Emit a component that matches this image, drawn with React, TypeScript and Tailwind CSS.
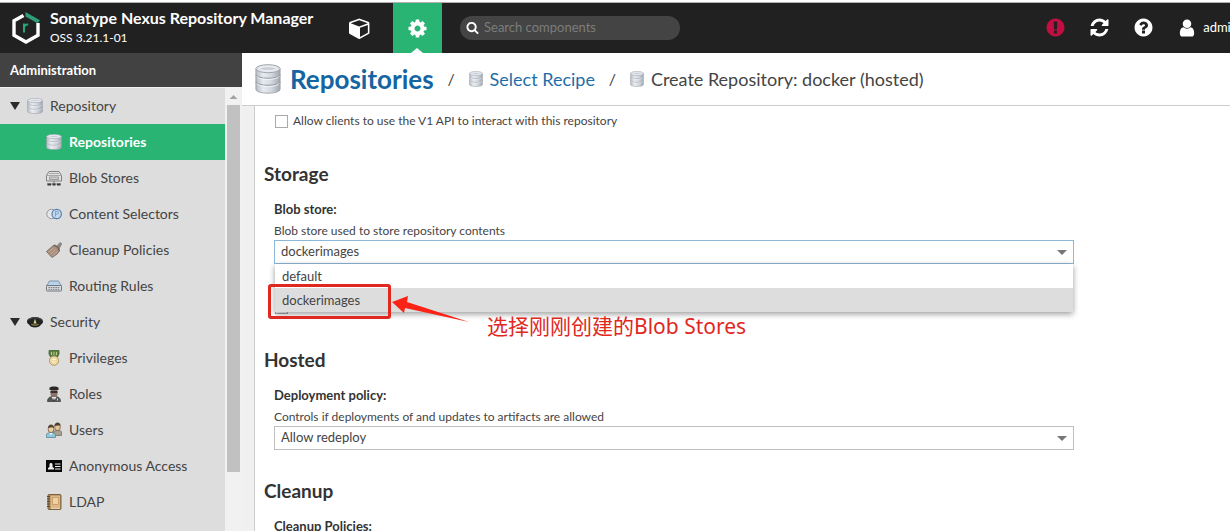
import { useState } from "react";
import type { ReactNode } from "react";
import clsx from "clsx";

const glyphs = {
  cube: "M896 1629l640-349v-636l-640 233v752zm-64-865l698-254-698-254-698 254zm832-252v768q0 35-18 65t-49 47l-704 384q-28 16-61 16t-61-16l-704-384q-31-17-49-47t-18-65v-768q0-40 23-73t61-47l704-256q22-8 44-8t44 8l704 256q38 14 61 47t23 73z",
  cog: "M1152 896q0-106-75-181t-181-75-181 75-75 181 75 181 181 75 181-75 75-181zm512-109v222q0 12-8 23t-20 13l-185 28q-19 54-39 91 35 50 107 138 10 12 10 25t-9 23q-27 37-99 108t-94 71q-12 0-26-9l-138-108q-44 23-91 38-16 136-29 186-7 28-36 28h-222q-14 0-24.5-8.5t-11.5-21.5l-28-184q-49-16-90-37l-141 107q-10 9-25 9-14 0-25-11-126-114-165-168-7-10-7-23 0-12 8-23 15-21 51-66.5t54-70.5q-27-50-41-99l-183-27q-13-2-21-12.5t-8-23.5v-222q0-12 8-23t19-13l186-28q14-46 39-92-40-57-107-138-10-12-10-24 0-10 9-23 26-36 98.5-107.5t94.5-71.5q13 0 26 10l138 107q44-23 91-38 16-136 29-186 7-28 36-28h222q14 0 24.5 8.5t11.5 21.5l28 184q49 16 90 37l142-107q9-9 24-9 13 0 25 10 129 119 165 170 7 8 7 22 0 12-8 23-15 21-51 66.5t-54 70.5q26 50 41 98l183 28q13 2 21 12.5t8 23.5z",
  search: "M1216 832q0-185-131.5-316.5t-316.5-131.5-316.5 131.5-131.5 316.5 131.5 316.5 316.5 131.5 316.5-131.5 131.5-316.5zm512 832q0 52-38 90t-90 38q-54 0-90-38l-343-342q-179 124-399 124-143 0-273.5-55.5t-225-150-150-225-55.5-273.5 55.5-273.5 150-225 225-150 273.5-55.5 273.5 55.5 225 150 150 225 55.5 273.5q0 220-124 399l343 343q37 37 37 90z",
  refresh: "M1639 1056q0 5-1 7-64 268-268 434.5t-478 166.5q-146 0-282.5-55t-243.5-157l-129 129q-19 19-45 19t-45-19-19-45v-448q0-26 19-45t45-19h448q26 0 45 19t19 45-19 45l-137 137q71 66 161 102t187 36q134 0 250-65t186-179q11-17 53-117 8-23 30-23h192q13 0 22.5 9.5t9.5 22.5zm25-800v448q0 26-19 45t-45 19h-448q-26 0-45-19t-19-45 19-45l138-138q-148-137-349-137-134 0-250 65t-186 179q-11 17-53 117-8 23-30 23h-199q-13 0-22.5-9.5t-9.5-22.5v-7q65-268 270-434.5t480-166.5q146 0 284 55.5t245 156.5l130-129q19-19 45-19t45 19 19 45z",
  warning: "M896 128q209 0 385.5 103t279.5 279.5 103 385.5-103 385.5-279.5 279.5-385.5 103-385.5-103-279.5-279.5-103-385.5 103-385.5 279.5-279.5 385.5-103zm128 1247v-190q0-14-9-23.5t-22-9.5h-192q-13 0-23 10t-10 23v190q0 13 10 23t23 10h192q13 0 22-9.5t9-23.5zm-2-344l18-621q0-12-10-18-10-8-24-8h-220q-14 0-24 8-10 6-10 18l17 621q0 10 10 17.5t24 7.5h185q14 0 23.5-7.5t10.5-17.5z",
  help: "M1024 1376v-192q0-14-9-23t-23-9h-192q-14 0-23 9t-9 23v192q0 14 9 23t23 9h192q14 0 23-9t9-23zm256-672q0-88-55.5-163t-138.5-116-170-41q-243 0-371 213-15 24 8 42l132 100q7 6 19 6 16 0 25-12 53-68 86-92 34-24 86-24 48 0 85.5 26t37.5 59q0 38-20 61t-68 45q-63 28-115.5 86.5t-52.5 125.5v36q0 14 9 23t23 9h192q14 0 23-9t9-23q0-19 21.5-49.5t54.5-49.5q32-18 49-28.5t46-35 44.5-48 28-60.5 12.5-81zm384 192q0 209-103 385.5t-279.5 279.5-385.5 103-385.5-103-279.5-279.5-103-385.5 103-385.5 279.5-279.5 385.5-103 385.5 103 279.5 279.5 103 385.5z",
  user: "M1536 1399q0 109-62.5 187t-150.5 78h-854q-88 0-150.5-78t-62.5-187q0-85 8.5-160.5t31.5-152 58.5-131 94-89 134.5-34.5q131 128 313 128t313-128q76 0 134.5 34.5t94 89 58.5 131 31.5 152 8.5 160.5zm-256-887q0 159-112.5 271.5t-271.5 112.5-271.5-112.5-112.5-271.5 112.5-271.5 271.5-112.5 271.5 112.5 112.5 271.5z",
};

const Glyph = ({ name, className }: { name: keyof typeof glyphs; className?: string }) => (
  <svg viewBox="0 0 1792 1792" fill="currentColor" className={clsx("shrink-0", className)} aria-hidden="true">
    <path d={glyphs[name]} />
  </svg>
);

const Logo = () => (
  <svg viewBox="0 0 28 32" className="h-8 w-7 shrink-0" aria-hidden="true">
    <path d="M11.5 3.4 2 8.8v14.4L14 30l12-6.800V11" fill="none" stroke="#fff" strokeWidth="3.400" />
    <path d="M13.500 0 28 8.200l-2.500 3L13.500 4.400z" fill="#2f9c7a" />
    <path d="M12 20.500v-9M12 15.500c.3-2 1.800-3.200 4.200-2.800" fill="none" stroke="#22a87a" strokeWidth="2" />
  </svg>
);

const Database = ({ className }: { className?: string }) => (
  <svg viewBox="0 0 28 32" preserveAspectRatio="none" className={clsx("shrink-0", className)} aria-hidden="true">
    <defs>
      <linearGradient id="drum">
        <stop offset="0" stopColor="#b4bac4" />
        <stop offset=".3" stopColor="#e8ecf1" />
        <stop offset=".65" stopColor="#d2d7df" />
        <stop offset="1" stopColor="#a0a6b0" />
      </linearGradient>
    </defs>
    <path d="M1 5v22c0 5.500 26 5.500 26 0V5z" fill="url(#drum)" stroke="#9ea2aa" />
    <path d="M1 11.500c0 5 26 5 26 0M1 19c0 5 26 5 26 0" fill="none" stroke="#989ca5" strokeWidth="1.300" />
    <path d="M2 13c1 4.500 23 4.500 24 0M2 20.500c1 4.500 23 4.500 24 0" fill="none" stroke="#f6f8fa" />
    <ellipse cx="14" cy="5" rx="13" ry="4.300" fill="#dfe3e9" stroke="#9ea2aa" />
    <ellipse cx="14" cy="5" rx="9" ry="2.300" fill="#cdd2da" stroke="#f4f6f8" />
  </svg>
);

const Small = ({ children }: { children: ReactNode }) => (
  <svg viewBox="0 0 16 16" className="size-4 shrink-0" aria-hidden="true">
    {children}
  </svg>
);

const BlobIcon = () => (
  <Small>
    <path d="M3 1.500h10l2.500 4V11H.5V5.500z" fill="#e2e2e2" stroke="#808080" />
    <path d="M3 3.500h10M1 5.500h14" stroke="#999" strokeWidth=".8" />
    <path d="M3.500 7h9v2.500h-9z" fill="#cfcfcf" stroke="#8a8a8a" strokeWidth=".8" />
    <path d="M8 11v3M1 14h14" stroke="#777" />
    <path d="M1.500 13.500h3.500v2H1.500zM6.500 13.500h3v2h-3zM11 13.500h3.500v2H11z" fill="#3a3a3a" />
  </Small>
);

const SelectorsIcon = () => (
  <Small>
    <circle cx="5.500" cy="8" r="4.700" fill="#e4e6e8" stroke="#96999d" />
    <circle cx="10.700" cy="8" r="4.700" fill="#c6d9ee" stroke="#5580ae" strokeWidth="1.200" />
    <path d="M9.500 10.500v-5h1.800c1.800 0 1.800 2.700 0 2.700H9.500" fill="none" stroke="#6f94bd" strokeWidth=".8" />
  </Small>
);

const BroomIcon = () => (
  <Small>
    <path d="m10 5.500 4-5 1.700 1.200L13 7z" fill="#8d8d8d" stroke="#666" strokeWidth=".6" />
    <path d="M8 3c2.500 0 5.500 3 5.500 6L11 12l-5 3.500L.5 9.500z" fill="#a98f7c" stroke="#715d50" strokeWidth=".8" />
    <path d="m2.500 10 5-4M4.500 12l5-4.500M6.500 14l5-4.500" stroke="#c9b5a4" strokeWidth=".8" />
    <path d="M7.500 3.500c3 .5 5 2.500 5.800 5.500" fill="none" stroke="#6c6461" strokeWidth="1.200" />
  </Small>
);

const RoutingIcon = () => (
  <Small>
    <path d="M3.500 3h9L15.500 8H.5z" fill="#b9d3e8" stroke="#6d86a0" strokeWidth=".8" />
    <rect x=".5" y="7.500" width="15" height="5.500" rx=".7" fill="#d8dadd" stroke="#707883" />
    <path d="M2.500 9.500h11M2.500 11.300h11" stroke="#767e89" strokeDasharray="1.500 .8" />
  </Small>
);

const SecurityIcon = () => (
  <Small>
    <path d="M0 7.500C0 1.500 16 1.500 16 7.500c0 1.500-1 2.500-2 3-1.500 4-10.500 4-12 0-1-.5-2-1.500-2-3z" fill="#232323" />
    <path d="M1.500 6c3-3 10-3 13 0" fill="none" stroke="#5c5c5c" strokeWidth=".8" />
    <path d="m8 4.500 1.500 5h-3z" fill="#d9d48a" />
    <path d="M4.500 10.500c2 .8 5 .8 7 0" fill="none" stroke="#aa9d4a" />
  </Small>
);

const PrivilegesIcon = () => (
  <Small>
    <path d="M3 .5h10v3.500L11.500 7h-7L3 4z" fill="#5d8043" stroke="#3f5f2d" strokeWidth=".8" />
    <path d="M5.500 2v3M8 2v3M10.500 2v3" stroke="#c7d39a" strokeWidth=".9" />
    <circle cx="8" cy="10.700" r="4.600" fill="#efd9a7" stroke="#b79a60" />
    <path d="M6 9.500h4M6.500 12h3" stroke="#fff4d6" />
  </Small>
);

const RolesIcon = () => (
  <Small>
    <path d="M1.500 15.500c0-3.500 2-5 6.500-5s6.500 1.500 6.500 5z" fill="#555" stroke="#333" strokeWidth=".7" />
    <path d="m5.500 11 2.500 4 2.500-4z" fill="#ececec" />
    <path d="m8 11.500.8 3.500H7.200z" fill="#222" />
    <rect x="4.500" y="3" width="7" height="8" rx="3" fill="#8c7468" />
    <path d="M3.500 1.500C5 0 11 0 12.500 1.500V4h-9z" fill="#292929" />
    <path d="M4.500 6h7" stroke="#222" strokeWidth="1.600" />
    <path d="M11.500 12.500v2" stroke="#ddd" />
  </Small>
);

const UsersIcon = () => (
  <Small>
    <path d="M7.500 13.500V10c0-2 8-2 8 0v3.500z" fill="#a9a292" stroke="#6b655a" strokeWidth=".7" />
    <ellipse cx="11.500" cy="5" rx="2.900" ry="3.600" fill="#e6c695" stroke="#67503a" strokeWidth=".7" />
    <path d="M8.500 4c0-5 6-4.500 6-.5-2 0-3-.5-6 .5z" fill="#4e3e2c" />
    <path d="M.5 15.500v-3c0-2.500 9-2.500 9 0v3z" fill="#8fc9dc" stroke="#4d7c8c" strokeWidth=".7" />
    <ellipse cx="5" cy="7" rx="2.900" ry="3.600" fill="#edcfa0" stroke="#67503a" strokeWidth=".7" />
    <path d="M2 6c0-5 6-4.500 6-.5-2 0-3-.5-6 .5z" fill="#51463a" />
    <path d="m3.500 11 1.500 2 1.500-2" fill="#fff" />
  </Small>
);

const AnonymousIcon = () => (
  <Small>
    <rect y="2" width="16" height="12" fill="#080808" />
    <path d="M2 11.500V10l1.500-1V6.500c0-2 3-2 3 0V9L8 10v1.500zM9 5.500h5.500v1H9zM9 8h5.500v1H9zM9 10.500h5.500v1H9z" fill="#eee" />
  </Small>
);

const LdapIcon = () => (
  <Small>
    <rect x="2" y=".5" width="13" height="15" rx="1" fill="#a98452" stroke="#7d6240" />
    <rect x="4.500" y="1.500" width="9.500" height="12.500" fill="#deb887" />
    <rect x="6.500" y="3.500" width="6" height="7" fill="#f0cfa0" stroke="#b58b57" strokeWidth=".6" />
    <path d="M1 2.500h3M1 5h3M1 7.500h3M1 10h3M1 12.500h3" stroke="#4c463d" strokeWidth="1.100" />
    <path d="M5 14.500h9" stroke="#f3e6cf" strokeWidth=".8" />
  </Small>
);

const menu = [
  {
    label: "Repository",
    icon: <Database className="h-4 w-4" />,
    items: [
      { label: "Repositories", icon: <Database className="h-4 w-4" /> },
      { label: "Blob Stores", icon: <BlobIcon /> },
      { label: "Content Selectors", icon: <SelectorsIcon /> },
      { label: "Cleanup Policies", icon: <BroomIcon /> },
      { label: "Routing Rules", icon: <RoutingIcon /> },
    ],
  },
  {
    label: "Security",
    icon: <SecurityIcon />,
    items: [
      { label: "Privileges", icon: <PrivilegesIcon /> },
      { label: "Roles", icon: <RolesIcon /> },
      { label: "Users", icon: <UsersIcon /> },
      { label: "Anonymous Access", icon: <AnonymousIcon /> },
      { label: "LDAP", icon: <LdapIcon /> },
    ],
  },
];

const Header = () => (
  <header className="flex h-[53px] shrink-0 items-stretch overflow-hidden border-t-2 border-white bg-[#212121] text-white shadow-[inset_0_1px_#b0b0b0]">
    <div className="flex w-[326px] shrink-0 items-center gap-[10px] pl-3">
      <Logo />
      <div className="leading-5">
        <div className="text-base/5 font-bold whitespace-nowrap">Sonatype Nexus Repository Manager</div>
        <div className="text-xs/5">OSS 3.21.1-01</div>
      </div>
    </div>
    <button aria-label="Browse" className="flex w-[67px] shrink-0 items-center justify-center">
      <Glyph name="cube" className="size-[22px]" />
    </button>
    <button aria-label="Administration" className="relative mt-px flex w-[49px] shrink-0 items-center justify-center bg-[#29b473]">
      <Glyph name="cog" className="size-[21px]" />
      <svg viewBox="0 0 12 5" className="absolute bottom-0 left-[18px] h-[5px] w-3" aria-hidden="true">
        <path d="M0 5 6 0l6 5z" fill="#fff" />
      </svg>
    </button>
    <label className="ml-[18px] flex h-6 w-[220px] shrink-0 items-center gap-[5px] self-center rounded-full bg-[#444] pl-[6px]">
      <Glyph name="search" className="size-[13px]" />
      <input
        type="search"
        aria-label="Search components"
        placeholder="Search components"
        className="w-full bg-transparent text-[13px] outline-none placeholder:text-[#7c7c7c]"
      />
    </label>
    <div className="ml-auto flex shrink-0 items-center">
      <button aria-label="System status" className="flex w-11 justify-center text-[#c40d42]">
        <Glyph name="warning" className="size-[21px]" />
      </button>
      <button aria-label="Refresh" className="flex w-11 justify-center">
        <Glyph name="refresh" className="size-[21px]" />
      </button>
      <button aria-label="Help" className="flex w-11 justify-center">
        <Glyph name="help" className="size-[21px]" />
      </button>
      <button className="-mr-2 flex items-center gap-[6px] pl-3 text-[13px]">
        <Glyph name="user" className="size-5" />
        admin
      </button>
    </div>
  </header>
);

const Sidebar = () => {
  const [selected, setSelected] = useState("Repositories");

  return (
    <aside className="flex w-[242px] shrink-0 flex-col overflow-hidden">
      <h2 className="h-[34px] shrink-0 bg-[#424242] pl-[10px] text-[13px]/[34px] font-bold text-white">Administration</h2>
      <div className="flex min-h-0 flex-1 border-t border-[#f1f1f1]">
        <nav className="flex-1 overflow-hidden bg-[#ddd]">
          {menu.map((group) => (
            <div key={group.label}>
              <button className="flex h-9 w-full items-center text-sm text-[#444]">
                <svg viewBox="0 0 10 8" className="mr-[7px] ml-[10px] h-2 w-[10px]" aria-hidden="true">
                  <path d="M0 0h10L5 8z" fill="#2b2b2b" />
                </svg>
                {group.icon}
                <span className="ml-[7px]">{group.label}</span>
              </button>
              {group.items.map(({ label, icon }) => (
                <button
                  key={label}
                  onClick={() => setSelected(label)}
                  className={clsx(
                    "flex h-9 w-full items-center gap-[7px] pl-[46px] text-sm",
                    selected == label ? "bg-[#29b473] font-bold text-white" : "text-[#444]"
                  )}
                >
                  {icon}
                  {label}
                </button>
              ))}
            </div>
          ))}
        </nav>
        <div className="flex w-[17px] flex-col items-center bg-[#f1f1f1]">
          <svg viewBox="0 0 17 17" className="size-[17px] shrink-0" aria-hidden="true">
            <path d="M4.500 11 8.500 7l4 4z" fill="#a3a3a3" />
          </svg>
          <div className="h-[367px] w-[13px] bg-[#c1c1c1]" />
        </div>
      </div>
    </aside>
  );
};

const Breadcrumb = () => (
  <nav className="flex h-[53px] shrink-0 items-center border-b border-[#ccc] pl-[13px] text-lg whitespace-nowrap text-[#444]">
    <Database className="h-[30px] w-[26px]" />
    <h1 className="ml-[9px] text-[26px] font-bold text-[#1565a3]">
      <a href="#repositories">Repositories</a>
    </h1>
    <span className="w-[35px] text-center text-base">/</span>
    <Database className="h-4 w-[14px]" />
    <a href="#recipe" className="ml-[7px] text-[#1f6ea8]">
      Select Recipe
    </a>
    <span className="w-[35px] text-center text-base">/</span>
    <Database className="h-4 w-[14px]" />
    <span className="ml-[7px]">Create Repository: docker (hosted)</span>
  </nav>
);

const Section = ({ title, children }: { title: string; children: ReactNode }) => (
  <section className="mt-[27px]">
    <h3 className="text-[19px]/7 font-bold text-[#333]">{title}</h3>
    <div className="mt-[11px] pl-[10px]">{children}</div>
  </section>
);

type FieldProps = {
  id: string;
  label: string;
  help?: string;
  options?: string[];
  value?: string;
  open?: boolean;
  onChange?: (value: string) => void;
  children?: ReactNode;
};

const Field = ({ id, label, help, options, value, open, onChange, children }: FieldProps) => (
  <div className="max-w-[800px]">
    <label htmlFor={id} className="block text-[13px]/5 font-bold text-[#333]">
      {label}
    </label>
    {help && <p className="mt-1 mb-px text-xs/4 text-[#444]">{help}</p>}
    <div className="relative">
      <select
        id={id}
        value={value}
        onChange={(e) => onChange?.(e.target.value)}
        className={clsx(
          "block h-6 w-full appearance-none border bg-white pl-[6px] text-[13px] text-[#444] outline-none",
          open ? "border-[#8bb8d8]" : "border-[#c0c0c0]"
        )}
      >
        {options?.map((option) => (
          <option key={option}>{option}</option>
        ))}
      </select>
      <svg viewBox="0 0 10 5" className="pointer-events-none absolute top-[10px] right-[7px] h-[5px] w-[10px]" aria-hidden="true">
        <path d="M0 0h10L5 5z" fill="#777" />
      </svg>
      {children}
    </div>
  </div>
);

// Marks the option to pick, with the arrow and its caption
const Callout = () => (
  <div className="pointer-events-none absolute top-11 -left-[6px] z-20 flex items-start">
    <div className="h-[35px] w-[123px] rounded-[3px] border-3 border-[#e0281f]" />
    <svg viewBox="0 0 78 30" className="mt-[10px] h-[30px] w-[78px]" aria-hidden="true">
      <path d="M1 8 17 2l-1 6 62 20-64-14-1 5z" fill="#fb2316" />
    </svg>
    <span className="mt-7 ml-[18px] font-['Noto_Sans','Noto_Sans_CJK_SC',sans-serif] text-[21px]/7 whitespace-nowrap text-[#e0281f]">
      选择刚刚创建的Blob Stores
    </span>
  </div>
);

const blobStores = ["default", "dockerimages"];

const App = () => {
  const [store, setStore] = useState("dockerimages");

  return (
    <div className="flex h-screen flex-col overflow-hidden bg-white font-['Lato',sans-serif]">
      <Header />
      <div className="flex min-h-0 flex-1">
        <Sidebar />
        <main className="flex min-w-0 flex-1 flex-col">
          <Breadcrumb />
          <div className="flex min-h-0 flex-1 bg-[#f0f0f0] pl-3">
            <div className="flex-1 overflow-hidden border-l border-[#ccc] bg-white pl-[9px]">
              <label className="mt-[7px] mb-[31px] flex h-4 items-center gap-[5px] pl-[11px] text-xs text-[#444]">
                <input type="checkbox" className="size-[13px] appearance-none border border-[#aaa] bg-white" />
                Allow clients to use the V1 API to interact with this repository
              </label>

              <Section title="Storage">
                <Field
                  id="blob-store"
                  label="Blob store:"
                  help="Blob store used to store repository contents"
                  options={blobStores}
                  value={store}
                  onChange={setStore}
                  open
                >
                  <ul role="listbox" aria-label="Blob store" className="absolute inset-x-px top-6 z-10 bg-white text-[13px]/6 text-[#444] shadow-[0_2px_6px_rgba(0,0,0,0.4)]">
                    {blobStores.map((name) => (
                      <li
                        key={name}
                        role="option"
                        aria-selected={store == name}
                        onClick={() => setStore(name)}
                        className={clsx("pl-[7px]", store == name && "bg-[#ddd]")}
                      >
                        {name}
                      </li>
                    ))}
                  </ul>
                  <Callout />
                </Field>
                <input
                  type="checkbox"
                  aria-label="Strict content type validation"
                  className="mt-[37px] mb-8 ml-px block size-[13px] appearance-none border border-[#aaa] bg-white"
                />
              </Section>

              <Section title="Hosted">
                <Field
                  id="deployment-policy"
                  label="Deployment policy:"
                  help="Controls if deployments of and updates to artifacts are allowed"
                  options={["Allow redeploy"]}
                />
              </Section>

              <Section title="Cleanup">
                <Field id="cleanup-policies" label="Cleanup Policies:" options={["None"]} />
              </Section>
            </div>
          </div>
        </main>
      </div>
    </div>
  );
};

export default App;
